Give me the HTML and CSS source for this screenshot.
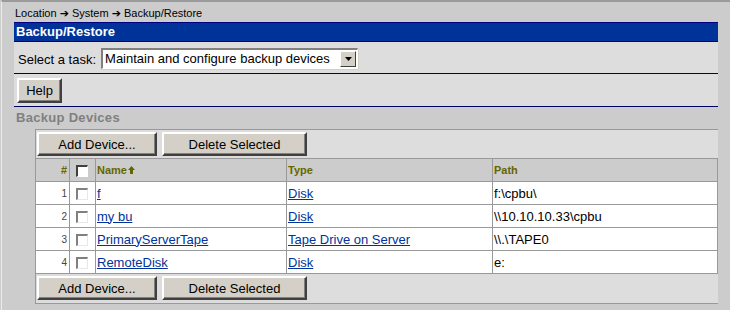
FILE: index.html
```html
<!DOCTYPE html>
<html lang="en">
<head>
  <meta charset="UTF-8">
  <title>Backup/Restore</title>
  <link rel="stylesheet" href="styles.css">
</head>
<body>
  <div class="frame">
    <div class="crumbs">Location <span class="arr">&#10132;</span> System <span class="arr">&#10132;</span> Backup/Restore</div>

    <div class="titlebar">Backup/Restore</div>

    <div class="taskrow">
      <span class="task-label">Select a task:</span>
      <span class="select">
        <span class="select-text">Maintain and configure backup devices</span>
        <span class="select-btn">
          <svg width="7" height="4" viewBox="0 0 7 4"><path d="M0 0h7L3.5 4z" fill="#000"/></svg>
        </span>
      </span>
    </div>

    <div class="helprow">
      <button class="btn btn-help">Help</button>
    </div>

    <div class="section-title">Backup Devices</div>

    <div class="panel">
      <div class="btnrow">
        <button class="btn btn-add">Add Device...</button>
        <button class="btn btn-del">Delete Selected</button>
      </div>

      <table class="devices">
        <colgroup>
          <col class="w-num">
          <col class="w-chk">
          <col class="w-name">
          <col class="w-type">
          <col>
        </colgroup>
        <tr class="head">
          <th class="c-num">#</th>
          <th class="c-chk"><span class="cb cb-head"></span></th>
          <th>Name<svg class="sort" width="7" height="8" viewBox="0 0 7 8"><path d="M3.5 0L7 4H5v4H2V4H0z" fill="#666600"/></svg></th>
          <th>Type</th>
          <th>Path</th>
        </tr>
        <tr>
          <td class="c-num">1</td>
          <td class="c-chk"><span class="cb"></span></td>
          <td><a href="#">f</a></td>
          <td><a href="#">Disk</a></td>
          <td>f:\cpbu\</td>
        </tr>
        <tr>
          <td class="c-num">2</td>
          <td class="c-chk"><span class="cb"></span></td>
          <td><a href="#">my bu</a></td>
          <td><a href="#">Disk</a></td>
          <td>\\10.10.10.33\cpbu</td>
        </tr>
        <tr>
          <td class="c-num">3</td>
          <td class="c-chk"><span class="cb"></span></td>
          <td><a href="#">PrimaryServerTape</a></td>
          <td><a href="#">Tape Drive on Server</a></td>
          <td>\\.\TAPE0</td>
        </tr>
        <tr>
          <td class="c-num">4</td>
          <td class="c-chk"><span class="cb"></span></td>
          <td><a href="#">RemoteDisk</a></td>
          <td><a href="#">Disk</a></td>
          <td>e:</td>
        </tr>
      </table>

      <div class="btnrow btnrow-bottom">
        <button class="btn btn-add">Add Device...</button>
        <button class="btn btn-del">Delete Selected</button>
      </div>
    </div>
  </div>
</body>
</html>
```

FILE: styles.css
```css
html, body {
  margin: 0;
  padding: 0;
}
body {
  background-color: #cccccc;
  font-family: "Liberation Sans", Arial, sans-serif;
  font-size: 13px;
  color: #000;
  width: 730px;
  height: 310px;
  overflow: hidden;
}
.frame {
  border-top: 2px solid #9a9a9a;
  border-left: 1px solid #f1ecdc;
  margin-left: 1px;
  padding: 0 12px 0 12px;
  height: 308px;
}
.crumbs {
  height: 20px;
  line-height: 23px;
  font-size: 11px;
  padding-left: 1px;
  white-space: nowrap;
}
.arr {
  font-family: "DejaVu Sans", sans-serif;
  font-size: 11px;
  font-weight: bold;
}
.titlebar {
  background-color: #003399;
  border-top: 1px solid #000080;
  border-bottom: 1px solid #000066;
  color: #fff;
  font-weight: bold;
  font-size: 13px;
  height: 18px;
  line-height: 18px;
  padding-left: 2px;
}
.taskrow {
  background-color: #dddddd;
  border-bottom: 1px solid #000066;
  height: 31px;
  display: flex;
  align-items: center;
  padding-left: 4px;
}
.task-label {
  margin-right: 5px;
  padding-top: 4px;
}
.select {
  display: flex;
  align-items: center;
  background: #fff;
  border-top: 2px solid #808080;
  border-left: 2px solid #808080;
  border-right: 1px solid #fff;
  border-bottom: 1px solid #fff;
  box-shadow: 0 1px 0 #d4d0c8, 1px 0 0 #d4d0c8;
  height: 18px;
  width: 254px;
  margin-top: 1px;
}
.select-text {
  flex: 1;
  padding-left: 2px;
  white-space: nowrap;
}
.select-btn {
  width: 14px;
  height: 14px;
  margin-right: 1px;
  background: #d4d0c8;
  border-top: 1px solid #fff;
  border-left: 1px solid #fff;
  border-right: 1px solid #404040;
  border-bottom: 1px solid #404040;
  display: flex;
  align-items: center;
  justify-content: center;
}
.helprow {
  background-color: #dddddd;
  border-bottom: 1px solid #000066;
  height: 32px;
  display: flex;
  align-items: center;
  padding-left: 3px;
}
.btn {
  font-family: "Liberation Sans", Arial, sans-serif;
  font-size: 13px;
  color: #000;
  background-color: #d4d0c8;
  border-top: 2px solid #fff;
  border-left: 2px solid #fff;
  border-right: 2px solid #404040;
  border-bottom: 2px solid #404040;
  box-shadow: inset -1px -1px 0 #808080;
  padding: 0;
  height: 24px;
  cursor: pointer;
}
.btn-help {
  width: 45px;
  height: 25px;
}
.section-title {
  color: #808080;
  font-weight: bold;
  font-size: 13px;
  letter-spacing: 0.3px;
  height: 22px;
  line-height: 22px;
  padding-left: 2px;
}
.panel {
  margin-left: 21px;
  background-color: #dddddd;
  border-top: 1px solid #999;
  border-left: 1px solid #999;
  border-bottom: 1px solid #999;
}
.btnrow {
  display: flex;
  gap: 5px;
  padding: 2px 0 2px 1px;
}
.btnrow-bottom {
  padding-top: 2px;
  padding-bottom: 3px;
}
.btn-add {
  width: 120px;
}
.btn-del {
  width: 145px;
}
.devices {
  border-collapse: collapse;
  table-layout: fixed;
  width: 683px;
  margin-left: -1px;
}
.w-num { width: 34px; }
.w-chk { width: 26px; }
.w-name { width: 191px; }
.w-type { width: 206px; }
.devices th,
.devices td {
  border: 1px solid #999;
  height: 22px;
  padding: 0 0 0 1px;
  text-align: left;
  white-space: nowrap;
  overflow: hidden;
}
.devices td {
  background-color: #fff;
}
.devices th {
  background-color: #cccccc;
  color: #666600;
  font-size: 11px;
  font-weight: bold;
}
.devices .c-num {
  text-align: right;
  padding-right: 2px;
}
.devices td.c-num {
  font-size: 10px;
  color: #444;
}
.devices .c-chk {
  padding-left: 6px;
}
.sort {
  margin-left: 1px;
  vertical-align: 0;
}
.devices a {
  color: #003399;
  text-decoration: underline;
}
.cb {
  display: inline-block;
  width: 9px;
  height: 9px;
  background: #fff;
  border-top: 2px solid #808080;
  border-left: 2px solid #808080;
  border-right: 1px solid #e8e8e8;
  border-bottom: 1px solid #e8e8e8;
  vertical-align: middle;
}
.cb-head {
  border-top-color: #404040;
  border-left-color: #404040;
  border-right-color: #fff;
  border-bottom-color: #fff;
}
```
